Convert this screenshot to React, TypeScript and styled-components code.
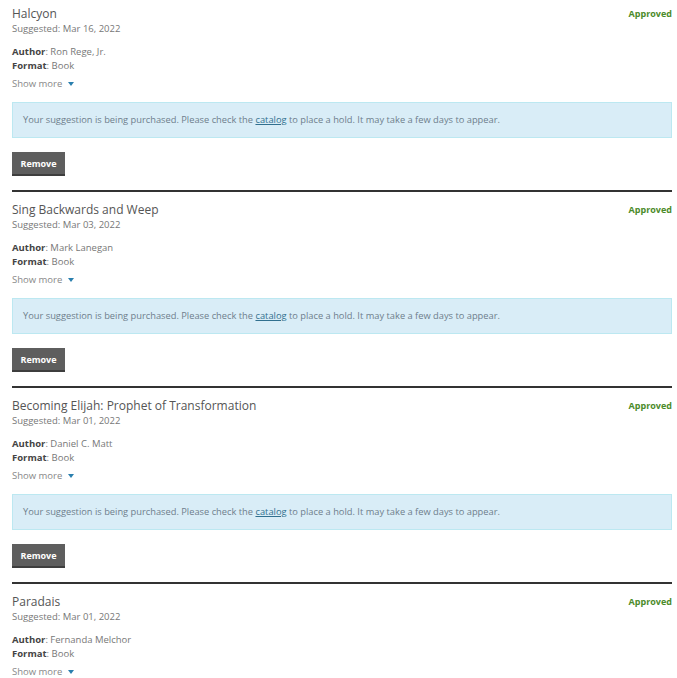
import React from "react";
import styled, { createGlobalStyle } from "styled-components";

const Global = createGlobalStyle`
  html, body { margin: 0; padding: 0; background: #fff; }
  body { font-family: "Open Sans", "Noto Sans", sans-serif; }
`;

const Page = styled.div`
  padding: 0 5px 0 12px;
`;

const Item = styled.section<{ $last?: boolean }>`
  padding: 5px 0 14px;
  border-bottom: ${(p) => (p.$last ? "none" : "2px solid #333")};
  & + & {
    padding-top: 9px;
  }
`;

const Head = styled.div`
  display: flex;
  justify-content: space-between;
  align-items: flex-start;
`;

const Title = styled.h2`
  margin: 0;
  font-size: 12px;
  line-height: 18px;
  font-weight: 400;
  color: #555;
`;

const Status = styled.span`
  font-size: 9px;
  font-weight: 700;
  color: #4c8b2b;
  margin-top: 2px;
`;

const Suggested = styled.div`
  font-size: 9.5px;
  line-height: 12px;
  color: #777;
`;

const Details = styled.div`
  margin-top: 10px;
  font-size: 9.5px;
  line-height: 14px;
  color: #777;
`;

const Label = styled.span`
  font-weight: 700;
  color: #444;
`;

const ShowMore = styled.button`
  display: flex;
  align-items: center;
  gap: 6px;
  padding: 0;
  margin-top: 4px;
  border: 0;
  background: none;
  font-family: inherit;
  font-size: 9.5px;
  line-height: 14px;
  color: #888;
  cursor: pointer;
`;

const Caret = styled.span`
  width: 0;
  height: 0;
  border-left: 3px solid transparent;
  border-right: 3px solid transparent;
  border-top: 4px solid #2a7fae;
`;

const Alert = styled.div`
  margin-top: 11px;
  padding: 10px 10px;
  background: #d9edf7;
  border: 1px solid #bce8f1;
  font-size: 9.3px;
  line-height: 14px;
  color: #6e7e8c;
`;

const Link = styled.a`
  color: #31708f;
  text-decoration: underline;
`;

const RemoveButton = styled.button`
  display: block;
  margin-top: 14px;
  height: 24px;
  width: 53px;
  padding: 0;
  border: 0;
  border-bottom: 2px solid #3e3e3e;
  background: #5e5e5e;
  color: #fff;
  font-family: inherit;
  font-size: 9px;
  font-weight: 700;
`;

type Suggestion = {
  title: string;
  date: string;
  author: string;
  format: string;
};

const data: Suggestion[] = [
  { title: "Halcyon", date: "Mar 16, 2022", author: "Ron Rege, Jr.", format: "Book" },
  { title: "Sing Backwards and Weep", date: "Mar 03, 2022", author: "Mark Lanegan", format: "Book" },
  { title: "Becoming Elijah: Prophet of Transformation", date: "Mar 01, 2022", author: "Daniel C. Matt", format: "Book" },
  { title: "Paradais", date: "Mar 01, 2022", author: "Fernanda Melchor", format: "Book" },
];

export default function App() {
  return (
    <>
      <Global />
      <Page>
        {data.map((s, i) => (
          <Item key={s.title} $last={i === data.length - 1}>
            <Head>
              <div>
                <Title>{s.title}</Title>
                <Suggested>Suggested: {s.date}</Suggested>
              </div>
              <Status>Approved</Status>
            </Head>
            <Details>
              <div>
                <Label>Author</Label>: {s.author}
              </div>
              <div>
                <Label>Format</Label>: {s.format}
              </div>
            </Details>
            <ShowMore>
              Show more <Caret />
            </ShowMore>
            <Alert>
              Your suggestion is being purchased. Please check the <Link href="#">catalog</Link> to place a hold. It may take a few days to appear.
            </Alert>
            <RemoveButton>Remove</RemoveButton>
          </Item>
        ))}
      </Page>
    </>
  );
}
